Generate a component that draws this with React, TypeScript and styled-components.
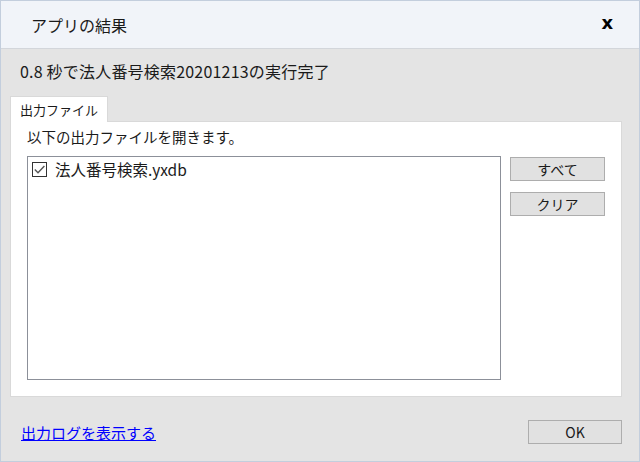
import React from 'react';
import styled, { createGlobalStyle } from 'styled-components';

const GlobalStyle = createGlobalStyle`
  html, body {
    margin: 0;
    padding: 0;
    background: #e4e4e4;
  }
  * {
    box-sizing: border-box;
  }
`;

const Window = styled.div`
  width: 640px;
  height: 462px;
  display: flex;
  flex-direction: column;
  background: #e4e4e4;
  border: 1px solid #c3cedd;
  font-family: 'Noto Sans CJK JP', 'Noto Sans', sans-serif;
  color: #1a1a1a;
`;

const TitleBar = styled.div`
  height: 48px;
  flex: none;
  display: flex;
  align-items: center;
  justify-content: space-between;
  padding: 0 26px 0 30px;
  background: #f1f4f9;
  border-bottom: 1px solid #d3d6db;
  font-size: 16px;
`;

const CloseButton = styled.span`
  font-family: 'DejaVu Sans', sans-serif;
  font-weight: 700;
  font-size: 18px;
  color: #000;
  margin-top: -4px;
`;

const Body = styled.div`
  flex: 1;
  display: flex;
  flex-direction: column;
  padding: 11px 17px 0 9px;
`;

const Message = styled.div`
  font-size: 16px;
  line-height: 22px;
  padding-left: 10px;
  margin-bottom: 14px;
  letter-spacing: 0.2px;
`;

const TabRow = styled.div`
  display: flex;
`;

const Tab = styled.div`
  height: 26px;
  padding: 0 9px;
  display: flex;
  align-items: center;
  background: #fff;
  border: 1px solid #d9d9d9;
  border-bottom: none;
  font-size: 13px;
  margin-bottom: -1px;
  position: relative;
`;

const Panel = styled.div`
  height: 276px;
  background: #fff;
  border: 1px solid #d9d9d9;
  padding: 4px 16px 16px 16px;
  display: flex;
  flex-direction: column;
`;

const PanelLabel = styled.div`
  font-size: 14.5px;
  line-height: 22px;
  margin-bottom: 8px;
`;

const ListArea = styled.div`
  flex: 1;
  display: flex;
  gap: 9px;
`;

const FileList = styled.div`
  width: 474px;
  border: 1px solid #8c9099;
  padding: 2px 4px;
`;

const FileItem = styled.label`
  display: flex;
  align-items: center;
  gap: 8px;
  font-size: 15.5px;
  line-height: 20px;
`;

const CheckBox = styled.span`
  width: 15px;
  height: 15px;
  border: 1px solid #333;
  display: flex;
  align-items: center;
  justify-content: center;
  background: #fff;
`;

const ButtonColumn = styled.div`
  display: flex;
  flex-direction: column;
  gap: 11px;
  padding-top: 1px;
`;

const Button = styled.button<{ $width?: number }>`
  width: ${(p) => p.$width ?? 95}px;
  height: 24px;
  background: #e1e1e1;
  border: 1px solid #adadad;
  font-family: 'Noto Sans CJK JP', 'Noto Sans', sans-serif;
  font-size: 14px;
  color: #1a1a1a;
  padding: 0;
  display: flex;
  align-items: center;
  justify-content: center;
`;

const Footer = styled.div`
  flex: 1;
  display: flex;
  align-items: center;
  justify-content: space-between;
  padding: 6px 0 0 11px;
`;

const LogLink = styled.a`
  color: #0000ff;
  text-decoration: underline;
  font-size: 15px;
`;

export default function App() {
  return (
    <>
      <GlobalStyle />
      <Window>
        <TitleBar>
          <span>アプリの結果</span>
          <CloseButton>x</CloseButton>
        </TitleBar>
        <Body>
          <Message>0.8 秒で法人番号検索20201213の実行完了</Message>
          <TabRow>
            <Tab>出力ファイル</Tab>
          </TabRow>
          <Panel>
            <PanelLabel>以下の出力ファイルを開きます。</PanelLabel>
            <ListArea>
              <FileList>
                <FileItem>
                  <CheckBox>
                    <svg width="13" height="13" viewBox="0 0 13 13">
                      <path d="M1.8 6.6 L5 9.8 L11.4 3" fill="none" stroke="#555" strokeWidth="1.4" />
                    </svg>
                  </CheckBox>
                  法人番号検索.yxdb
                </FileItem>
              </FileList>
              <ButtonColumn>
                <Button>すべて</Button>
                <Button>クリア</Button>
              </ButtonColumn>
            </ListArea>
          </Panel>
          <Footer>
            <LogLink href="#">出力ログを表示する</LogLink>
            <Button $width={94}>OK</Button>
          </Footer>
        </Body>
      </Window>
    </>
  );
}
